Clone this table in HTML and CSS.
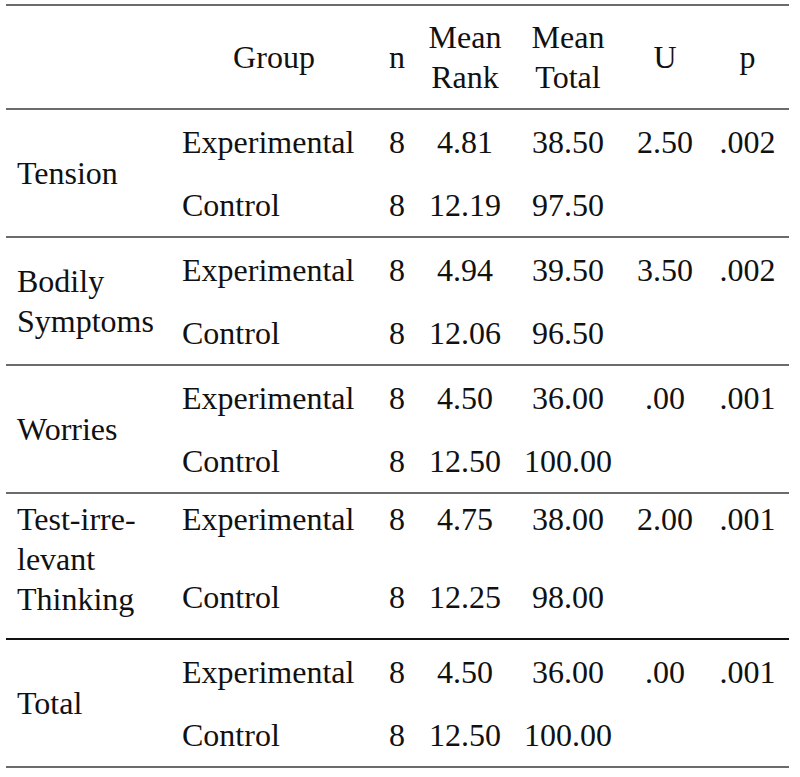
FILE: index.html
```html
<!DOCTYPE html>
<html lang="en">
<head>
<meta charset="utf-8">
<title>Mann-Whitney U results</title>
<link rel="stylesheet" href="styles.css">
</head>
<body class="page">
<div class="sheet">
  <div class="row head">
    <div class="cell label"></div>
    <div class="cell">Group</div>
    <div class="cell">n</div>
    <div class="cell">Mean<br>Rank</div>
    <div class="cell">Mean<br>Total</div>
    <div class="cell">U</div>
    <div class="cell">p</div>
  </div>

  <div class="row group">
    <div class="cell label span2">Tension</div>
    <div class="cell grp">Experimental</div><div class="cell">8</div><div class="cell">4.81</div><div class="cell">38.50</div><div class="cell">2.50</div><div class="cell">.002</div>
    <div class="cell grp">Control</div><div class="cell">8</div><div class="cell">12.19</div><div class="cell">97.50</div><div class="cell"></div><div class="cell"></div>
  </div>

  <div class="row group">
    <div class="cell label span2">Bodily<br>Symptoms</div>
    <div class="cell grp">Experimental</div><div class="cell">8</div><div class="cell">4.94</div><div class="cell">39.50</div><div class="cell">3.50</div><div class="cell">.002</div>
    <div class="cell grp">Control</div><div class="cell">8</div><div class="cell">12.06</div><div class="cell">96.50</div><div class="cell"></div><div class="cell"></div>
  </div>

  <div class="row group">
    <div class="cell label span2">Worries</div>
    <div class="cell grp">Experimental</div><div class="cell">8</div><div class="cell">4.50</div><div class="cell">36.00</div><div class="cell">.00</div><div class="cell">.001</div>
    <div class="cell grp">Control</div><div class="cell">8</div><div class="cell">12.50</div><div class="cell">100.00</div><div class="cell"></div><div class="cell"></div>
  </div>

  <div class="row group tall">
    <div class="cell label span2">Test-irre-<br>levant<br>Thinking</div>
    <div class="cell grp">Experimental</div><div class="cell">8</div><div class="cell">4.75</div><div class="cell">38.00</div><div class="cell">2.00</div><div class="cell">.001</div>
    <div class="cell grp lower">Control</div><div class="cell lower">8</div><div class="cell lower">12.25</div><div class="cell lower">98.00</div><div class="cell lower"></div><div class="cell lower"></div>
  </div>

  <div class="row group">
    <div class="cell label span2">Total</div>
    <div class="cell grp">Experimental</div><div class="cell">8</div><div class="cell">4.50</div><div class="cell">36.00</div><div class="cell">.00</div><div class="cell">.001</div>
    <div class="cell grp">Control</div><div class="cell">8</div><div class="cell">12.50</div><div class="cell">100.00</div><div class="cell"></div><div class="cell"></div>
  </div>
</div>
</body>
</html>
```
FILE: styles.css
```css
html, body {
  margin: 0;
  padding: 0;
  background: #ffffff;
}

.page {
  padding: 4px 0 0 6px;
  font-family: "Times New Roman", "Liberation Serif", Times, serif;
}

.sheet {
  width: 783px;
  font-family: "Times New Roman", "Liberation Serif", Times, serif;
  font-size: 32px;
  line-height: 40px;
  color: #111111;
  border-top: 2px solid #6b6b6b;
}

.row {
  display: grid;
  grid-template-columns: 166px 204px 42px 94px 112px 82px 83px;
  border-bottom: 2px solid #6b6b6b;
}

.head {
  height: 102px;
  align-items: center;
}

.group {
  grid-template-rows: 63px 63px;
  align-items: center;
}

.group.tall {
  grid-template-rows: 72px 72px;
  align-items: start;
  border-bottom-color: #111111;
}

.cell {
  font-family: "Times New Roman", "Liberation Serif", Times, serif;
  font-style: normal;
  font-weight: 400;
  text-align: center;
  white-space: nowrap;
}

.label {
  text-align: left;
  padding-left: 11px;
}

.span2 {
  grid-row: 1 / span 2;
}

.grp {
  text-align: left;
  padding-left: 10px;
}

.tall .cell {
  padding-top: 5px;
}

.tall .cell.lower {
  padding-top: 11px;
}
```
